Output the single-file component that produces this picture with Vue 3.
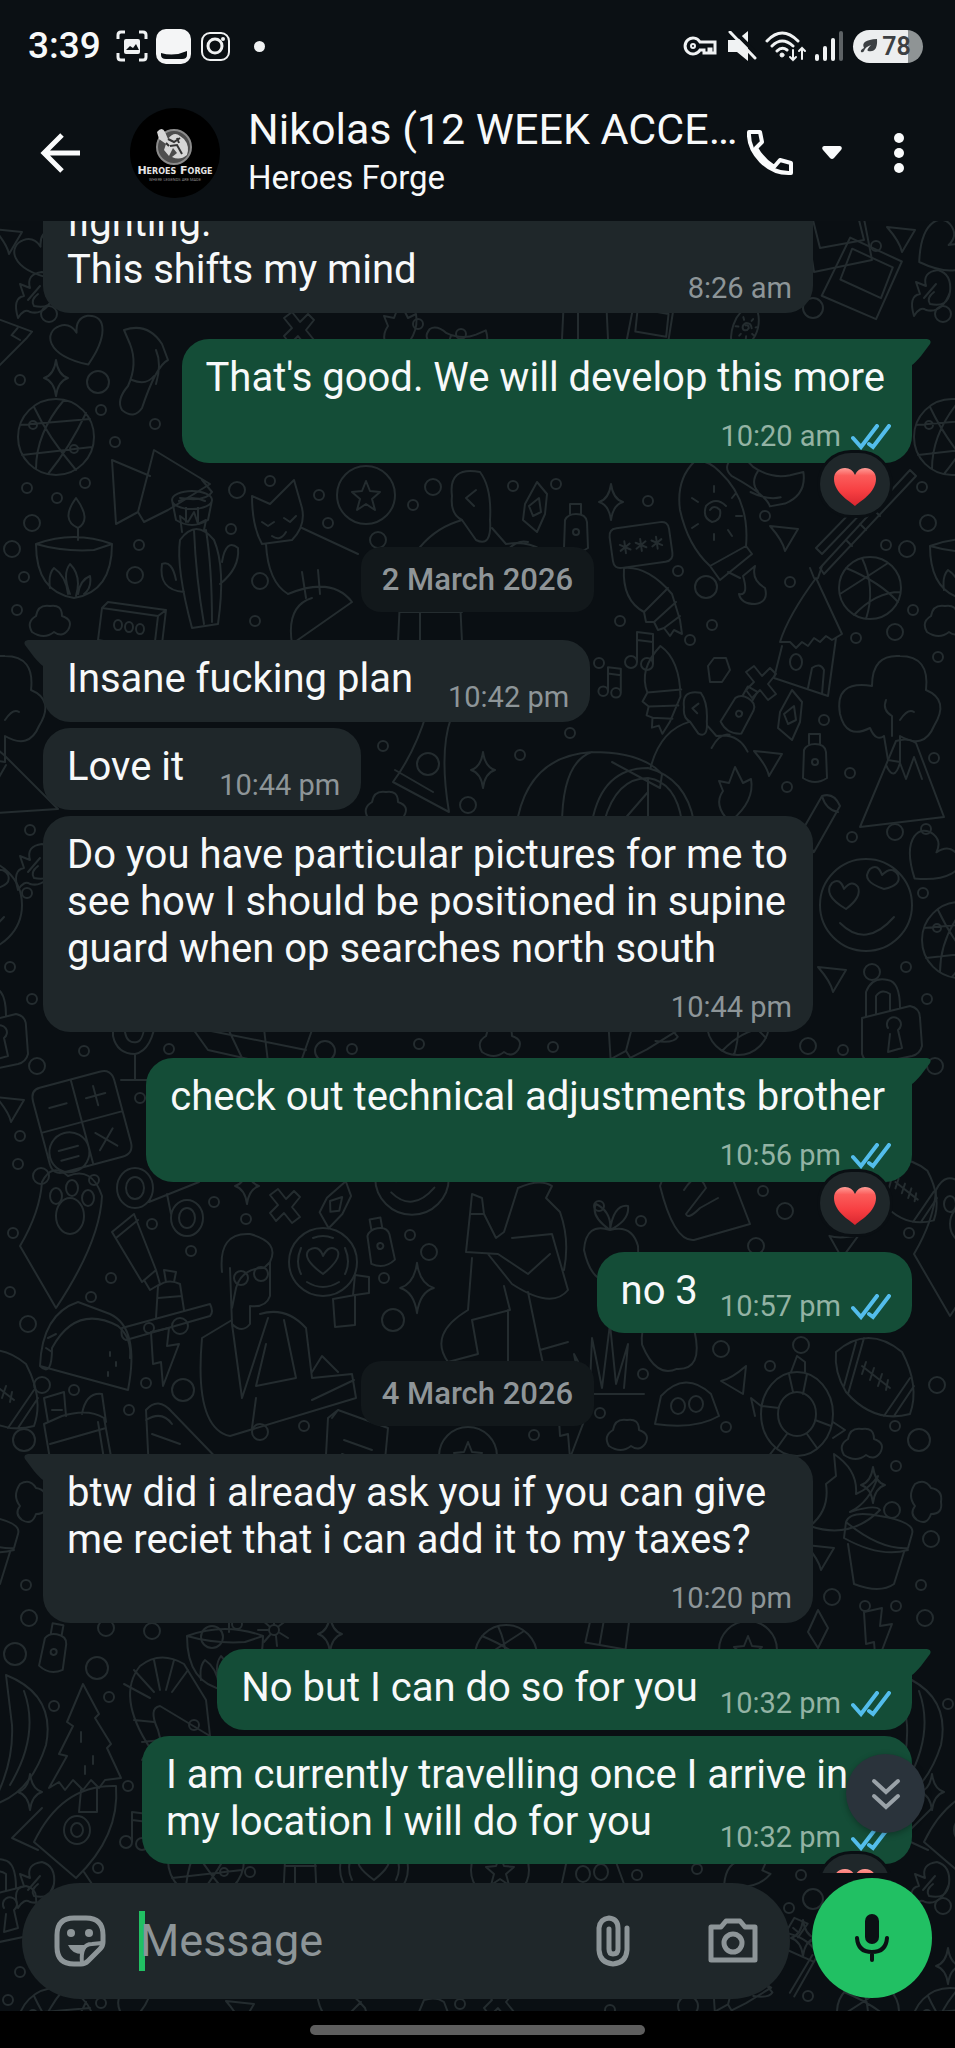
<script setup>
import { ref } from 'vue'

const contact = {
  name: 'Nikolas (12 WEEK ACCE…',
  company: 'Heroes Forge',
}

const draft = ref('')

/* layout: inline = time beside the text, stacked = time on its own row, tucked = time over the last line */
const feed = [
  { id: 1, side: 'in', layout: 'tucked', wide: true, text: 'fighting.\nThis shifts my mind', time: '8:26 am' },
  { id: 2, side: 'out', layout: 'stacked', tail: true, heart: true, text: "That's good. We will develop this more", time: '10:20 am' },
  { id: 3, date: '2 March 2026' },
  { id: 4, side: 'in', layout: 'inline', tail: true, text: 'Insane fucking plan', time: '10:42 pm' },
  { id: 5, side: 'in', layout: 'inline', text: 'Love it', time: '10:44 pm' },
  { id: 6, side: 'in', layout: 'stacked', text: 'Do you have particular pictures for me to see how I should be positioned in supine guard when op searches north south', time: '10:44 pm' },
  { id: 7, side: 'out', layout: 'stacked', tail: true, heart: true, text: 'check out technical adjustments brother', time: '10:56 pm' },
  { id: 8, side: 'out', layout: 'inline', text: 'no 3', time: '10:57 pm' },
  { id: 9, date: '4 March 2026' },
  { id: 10, side: 'in', layout: 'stacked', tail: true, text: 'btw did i already ask you if you can give me reciet that i can add it to my taxes?', time: '10:20 pm' },
  { id: 11, side: 'out', layout: 'inline', tail: true, text: 'No but I can do so for you', time: '10:32 pm' },
  { id: 12, side: 'out', layout: 'tucked', heart: true, text: 'I am currently travelling once I arrive in my location I will do for you', time: '10:32 pm' },
]

/* Wallpaper doodles, each drawn around 0,0 */
const shapes = {
  sparkle: 'M0-18Q2-3 12 0Q2 3 0 18Q-2 3-12 0Q-2-3 0-18Z',
  dart: 'M-14-11L14-8L1 14Q-1 4-14-11Z',
  heart: 'M0 24C-38 0-30-22-14-22Q-3-22 0-10Q4-24 16-22C36-16 26 6 0 24Z',
  sock: 'M-28-44Q-4-52 10-30L16-14Q4-8-10 34Q-18 46-30 36Q-36 26-24 12Q-14-10-22-30ZM-20 6Q-6 12 2 2M4-24Q10-10 4 10',
  globe: 'M-38 0A38 38 0 1 0 38 0A38 38 0 1 0-38 0M-22-30Q-8 0 20 33M-36-12L34-18M-34 18L36 10M8-37Q-20-4-20 32M30-24Q14 10-8 37M-27-12a4 4 0 1 0 8 0a4 4 0 1 0-8 0M14 12a4 4 0 1 0 8 0a4 4 0 1 0-8 0',
  map: 'M-46-28L-42 36L-20 24L-14 34L10 22L52-4L-4-38L-20 24M-46-28L-8-12M44-8L54 4Q48 14 22 10',
  cup: 'M-20-8A20 9 0 1 0 20-8A20 9 0 1 0-20-8L-16 12Q0 22 16 12L20-8M-13-7Q0-13 13-7M-6 0V14M6 0V14',
  coconut: 'M-38-14Q-38 34 0 40Q38 34 38-14Q0-28-38-14Q-10-6 20-8M38-14L20-8M4-18V-30Q-14-38 2-60Q18-38 4-30M-24 30Q-26 16-20 10Q-8 18-6 36M-4 36Q-12 16-4 6Q8 18 2 38M4 36Q6 22 16 18Q18 30 10 36',
  cactus: 'M-10 60Q-26 0-22-28Q-6-50 12-28Q24 0 16 56ZM-8-38Q-6 10 2 56M4-38Q10 0 10 54M-18 24Q-44 22-40-4Q-30-8-26 12M18 16Q38 0 36-20Q24-30 20-6M-20-36L-22-52L-14-46L-8-56L-4-44L4-48L2-38',
  star: 'M0-14L4-4L14-3L6 4L9 15L0 9L-9 15L-6 4L-14-3L-4-4ZM-29 0A29 29 0 1 0 29 0A29 29 0 1 0-29 0',
  fox: 'M-40-40L-22-32L2-56L10-28Q14-10 0 4L-30 8Q-40-10-40-40M-30-14L-24-10L-18-14M-8-18L-2-14L4-20M-20 0Q-12 6-6-4M10-8L66 18M-26 8Q-24 46-4 58M-4 58Q40 40 60 66L0 108Q-6 70 20 62M10 36L14 62M26 34L28 58',
  person: 'M-66 64Q-50 0 0-14L14 6Q30 14 28-14Q30-46 18-62Q-14-68-10-38Q-12-20 0-14M30-6L44 10Q80 4 96 36M36 30Q50 4 66 8M14-44L4-36L12-28',
  bottle: 'M-11-10Q-8-16 0-16Q10-16 11-8L12 18Q0 26-12 18ZM-6-16V-26H5V-16M-3 2A3 3 0 1 0 3 2A3 3 0 1 0-3 2',
  candy: 'M-10-4L2-26L12-14L10 6L2 24L-12 12ZM-6-2L4-10L6 4L-2 8Z',
  password: 'M-22-20H22Q30-20 30-12V12Q30 20 22 20H-22Q-30 20-30 12V-12Q-30-20-22-20ZM-16-6V6M-21-3L-11 3M-11-3L-21 3M0-6V6M-5-3L5 3M5-3L-5 3M16-6V6M11-3L21 3M21-3L11 3',
  surf: 'M-22-58Q-40-40-36-10Q-28 26-6 46L30 26Q34-20 4-48Q-10-62-22-58ZM-6 46L4 60L36 34L30 26M12 52L24 58M-6-10Q-2-16 4-10Q6 0-4 2Q-14-2-10-14Q0-24 10-14M-2-28V-34M16-22L20-27M20-4H26M-2 14V20M-18-18L-24-22M-18 4L-24 8M12 10L16 16',
  sticks: 'M-46 48L44-50L50-44L-42 54ZM-50 28L20-44L25-38L-44 34ZM-20 20L-14 26M-6 4L0 10M8-10L14-4',
  basket: 'M-31 0A31 31 0 1 0 31 0A31 31 0 1 0-31 0M-24-20Q10-6 28 14M-8-30Q6 0-4 31M18-25Q-8-8-30 6M30 4Q6 4-16 27',
  drop: 'M-10-12L2-22Q-2-8 12 0Q16 14 2 16Q-12 16-14 6Q-4 8-10-12Z',
  shell: 'M-28-34Q-4-36 20-8L28 18L30 32L22 28L18 34L12 26L6 28L2 20L-6 20L-8 10Q-30-2-28-34ZM-8 10L16-14M2 20L24 0M12 26L28 14',
  hut: 'M-28 12Q-20-14 8-52L34 4L24 10L18 6L12 12L6 8L0 16L-6 12L-12 18L-18 12ZM-26 16L-34 48L20 66L28 8M-18 32A6 8 0 1 0-6 32A6 8 0 1 0-18 32M0 58L4 38Q12 32 16 40L14 64M6-52L2-62M10-52L14-64',
  cloud: 'M-18 10Q-24 0-14-6Q-12-18 0-16Q12-18 12-6Q24-2 18 8Q12 16 4 10Q-6 18-18 10Z',
  box: 'M-30-14L26-6L22 28L-34 18ZM-30-14L-24-20L34-12L26-6M34-12L30 22L22 28M-18 3a4 5 0 1 0 8 0a4 5 0 1 0-8 0M-7 5a4 5 0 1 0 8 0a4 5 0 1 0-8 0M4 7a4 5 0 1 0 8 0a4 5 0 1 0-8 0',
  note: 'M-12 14A6 6 0 1 0 0 14A6 6 0 1 0-12 14M0 14V-16L16-14V16M4 16A6 6 0 1 0 16 16A6 6 0 1 0 4 16M0-8L16-6',
  hexagon: 'M-10-4L-4-12H8L12 0L4 12H-8Z',
  cross: 'M-16-10L-8-16L0-6L8-14L14-8L6 2L14 12L6 18L-2 8L-10 16L-16 8L-8 0Z',
  tree: 'M-6 36L-2 60L10 62V36Q34 50 44 26Q60 0 36-10Q40-44 10-44Q-18-46-18-14Q-56-20-50 14Q-44 40-20 28Q-14 42-6 36M2 36V16Q-8 10-4 0M10 20Q18 8 24 12',
  pizza: 'M-32 20Q-10-10 2-50Q20-54 26-44Q14-10 24 50ZM-8 2A11 11 0 1 0 14 2A11 11 0 1 0-8 2M-30 8L8 30',
  watch: 'M-86 46Q-76-26-10-30Q40-30 60-8L58 6L10-20M-40 44Q-40-20-10-30M-10 40Q0-14 46-14Q84-4 92 40M2 40Q14-4 46-4Q74 0 80 40M46-4V40M46 10L20 40',
  leaf: 'M-6 26Q-22 10-12-4L-16-14L-6-12L0-28L8-12L16-16Q20 6-4 26Z',
  mountain: 'M-42 52L-6-34Q6-38 14-32L42 42ZM-16-10Q-8 8-2-12L4 4L12-18L20 4',
  smiley: 'M-46 0A46 46 0 1 0 46 0A46 46 0 1 0-46 0M-26 18Q0 44 28 12M-20 4Q-44-10-34-22Q-26-28-22-16Q-14-26-8-18Q-4-8-20 4M18-16Q-6-24 4-36Q12-42 16-30Q26-40 32-30Q36-20 18-16',
  lock: 'M-26-8L22-20Q32-18 32-8L34 20Q32 28 24 30L-14 38Q-24 36-26 28ZM-22-10V-34Q-16-50 0-46Q12-44 12-18M-12-12V-30Q-6-38 2-32V-16M0 2A7 7 0 1 1 10 4L14 22L0 26L2 8',
  pencil: 'M-14 16L10-26Q22-30 28-16L2 30L-18 34ZM10-26Q14-12 26-10M-14 16Q-6 18 2 30',
  mic: 'M-10-34V2Q-8 14 2 12Q12 10 10-34M-22-30V6Q-18 24 0 24Q20 20 22-24M0 24V50M-14 50H12',
  grid: 'M-84-28L-54 14L36 34L50-6M-66-8L44 14M-40-20L-20 22M0-24L6 26',
  pane: 'M-32-44H30Q42-44 42-32V32Q42 44 30 44H-30Q-42 44-42 32V-32Q-42-44-32-44ZM0-44V44M-42 0H42M-28-22H-10M20-32V-12M10-22H30M10 14L28 32M28 14L10 32M-40 26A20 20 0 1 0 0 26A20 20 0 1 0-40 26M-30 22H-10M-30 32H-12',
  rings: 'M-20-8A18 20 0 1 0 16-8A18 20 0 1 0-20-8M-11-8A9 11 0 1 0 7-8A9 11 0 1 0-11-8M34 22A16 18 0 1 0 66 22A16 18 0 1 0 34 22M42 22A8 10 0 1 0 58 22A8 10 0 1 0 42 22M12 6L62-14M34 18L30-2',
  paw: 'M-12 86L-48 24Q-28-10-26-40Q-16-60 0-46Q24-56 34-26Q32 20-12 86ZM-12-6A14 18 0 1 0 16-6A14 18 0 1 0-12-6M-18-26a6 8 0 1 0 12 0a6 8 0 1 0-12 0M-2-34a6 8 0 1 0 12 0a6 8 0 1 0-12 0M14-24a6 8 0 1 0 12 0a6 8 0 1 0-12 0',
  ringHeart: 'M-34 0A34 34 0 1 0 34 0A34 34 0 1 0-34 0M0 12Q-22-4-14-12Q-4-18 0-6Q6-18 14-12Q20-4 0 12M-16 20Q0 30 16 20M-22-14Q-28 0-22 12M22-14Q28 0 22 12M-10-24Q0-28 10-24',
  tube: 'M-26-24L-4-42L18 14L4 26ZM-22-18L0-36M6 24L12 34L22 28L18 14',
  hat: 'M-50 36L38 12Q42 20 38 24L-46 48Q-52 46-50 36ZM-16 26L-14-6Q-4-14 8-8L12 18M-14 6L10 4M-6-10L-8-22L4-20L2-10',
  man: 'M-24-56Q-28-96 4-94Q34-86 24-66L18-60Q-4-60-10-40L-14-20M24-66V-32Q20-20 4-22V-4Q-4 6-14-4L-16-60M-12-50a7 7 0 1 0 14 0a7 7 0 1 0-14 0M8-54a7 7 0 1 0 14 0a7 7 0 1 0-14 0M-14-8L-44 10Q-52 100-16 108L110 70L106 46L66 50L60 0Q40-22 14-14M-14-4L-4 70L22-10M20 16L10 58L50 50L38-8M6 100L10 70M66 72L108 52M66 44L76 28L92 44',
  squares: 'M-20-6L2-10V20L-18 22ZM0-10L2-30L16-28V-12L2-10',
  walker: 'M0-102Q22-112 34-104L28-92L42-78Q52-50 46-20M0-102L-14-58L-22-52L-34-76L-48-76L-52-38L-20-36L10-16L32-36M-6-52L34-56L50 0Q34 20-6-6L-30-36M-46-32L-50 20Q-90 44-70 72L-40 64L-46 30L-8 20L-14-4M-10 20V80L40 72M10 2L22 60L50 52M22 60L26 78M-48-76L-46-96L-36-92L-34-76',
  apple: 'M0-22Q-24-30-26-2Q-18 34 4 28Q30 34 28-6Q22-28 0-22M0-22Q-20-36-14-48Q2-40 0-22Q4-48 18-46Q20-32 0-22',
  sign: 'M-44-16Q-34-48-6-40Q14-50 26-30L46 22L-10 38Q-30 40-44-16M-20-12Q-6-34 2-14L-18 12Q-16 18-4 6L14-4',
  taco: 'M-46 18Q-44-34-8-46L8-40L24-34Q54-20 42 42ZM-46 18Q-34 30-34 0Q-10-44 32-22Q46-10 44 10M-38-10L-30-14M24 4V8M30 14V18M22 24V28M-40 0L-34 4',
  bolt: 'M-14-24L4-28L2-10L14-12L-2 30L-4 6L-12 8Z',
  football: 'M-38-24Q-6-52 28-24Q46 10 36 38Q0 48-28 16Q-40-4-38-24ZM-18-34L-30 10M-10-38L-26 18M36 2L10 40M40 10L20 40M-12-10L16 12M-8-14L-12-2M0-8L-4 4M8-2L4 10M14 4L12 14',
  ghost: 'M-30 20L-24-8Q0-34 26-10L34 12Q10 26-30 20M-14 2a7 8 0 1 0 14 0a7 8 0 1 0-14 0M4 0a7 8 0 1 0 14 0a7 8 0 1 0-14 0',
  buoy: 'M-36 2A36 42 0 1 0 36 2A36 42 0 1 0-36 2M-19 2A19 22 0 1 0 19 2A19 22 0 1 0-19 2M-8-38L-4-20M10-38L6-18M-36-6L-18-4M34 14L18 8M-20 36L-10 22M20 36L10 22M-6-40L0-56L8-50V-40M-36-6L-46-14L-42 4M36 10L48 18L36 26M-22 36L-36 54L-20 60L-6 44',
  grass: 'M-40 40H38M-24 40L-32 0L-16 30L-14-16L-4 34L4-30L10 30L22-10L18 34',
  flask: 'M-34-24L-16-32Q10-40 26-30L38 36M-34-24L-22 46M-28-4L28-20M-30-26L-34-50L-14-56L-12-32M4-34Q8-56 24-54L28-26M-26-38H-16M20-26L30 36',
  cone: 'M-36 46L-40-36Q-28-50-14-34L40 22Q40 36 10 46M-40-26Q-24-36-14-22M-34-12L-6-2',
  card: 'M-30-30L-20-38L30-20L24 44H-34ZM-14-8L14 2M-16 6L10 16M-26-30L-20-38',
  pot: 'M-34-22Q-30-34 0-28Q36-22 32-10L28 4Q0 6-34-22ZM-34-22L-36-6Q0 14 28 6M-32 0L-26 40Q0 50 14 40L24 8',
  flame: 'M-30 36Q-10 20-14-6L-4-14L-6-36Q18-20 16 4Q30-2 38-14Q30 12 10 22Q36 14 40 20Q10 50-30 36Z',
  shrimp: 'M-14 48Q-48-4-24-34Q-4-50 20-36L42 0L46 36L36 30L-4 6Q-16 8-6 30L0 54L-22 60ZM-40-16L-14-2M-30-30L-10-8M-10-40L-4-10M10-40L2-10M24-30L8-8M-30 20L-10 22M-22 42L-2 40',
  pine: 'M-12-58L-28-20L-22-16L-36 12L-28 14L-46 46L-36 40L-30 48L-22 38L-12 48L-4 38L4 46L10 38L26 36L12 6L16 2L0-24L4-28ZM-14 48L-16 70H2V46M-14-10V0M-2 14V22M-10 24V32',
  banana: 'M-14-60Q36-40 26 10Q10 60-28 70Q-6 30-8-10ZM-14-60L-8-10M4-44Q20 0-10 50',
  rocket: 'M-38 10Q-10-48 44-46Q48 4 4 46ZM-8-2A13 14 0 1 0 18-2A13 14 0 1 0-8-2M-1-2A6 7 0 1 0 11-2A6 7 0 1 0-1-2M-34 18L-60 6L-30-24M12 40L24 58',
  fire: 'M-14 28Q-20 8-8 6L-12-6L-2-2Q-6-16 10-18Q24-14 22 4Q20 20 2 16Q-2 10 6 4M-14 28Q-8 18-2 22Q14 26 22 4M-4 10L8-4',
  blossom: 'M-5 0A5 5 0 1 0 5 0A5 5 0 1 0-5 0M0-6V-16M5-4L13-10M6 3L14 8M2 6L3 16M-4 5L-10 12M-6 0H-16M-5-4L-12-10',
  diamond: 'M-10 2L0-20L10-2L0 18Z',
  polaroid: 'M-34-28L22-38L34 24L-24 36ZM-26-20L18-28L26 4L-18 12Z',
  mountainSide: 'M-40 30L-14-40L-2-30L52 24ZM-20-16L-8-6L0-20',
  can: 'M-30-40H30L34 44H-34ZM-30-28H32M-10-28V44',
}

const doodles = [
  ['dart', 8, 240], ['heart', 44, 256, -20], ['fire', 32, 290], ['polaroid', 838, 236], ['polaroid', 862, 280, 35], ['dart', 901, 238],
  ['heart', 940, 250, 60], ['fire', 928, 288], ['mountainSide', 8, 340, 90, 0.6], ['heart', 80, 342, -20], ['sock', 152, 374], ['sparkle', 56, 378],
  ['globe', 56, 437], ['globe', 952, 437], ['map', 158, 488], ['cup', 192, 508], ['coconut', 74, 558], ['cactus', 202, 568],
  ['star', 366, 495], ['fox', 292, 536], ['person', 462, 534], ['candy', 535, 508], ['sparkle', 611, 502], ['bottle', 576, 530],
  ['password', 641, 545, -8], ['surf', 716, 520], ['sticks', 866, 520], ['sock', 760, 490, 100, 0.9], ['dart', 784, 537], ['drop', 753, 588],
  ['basket', 870, 588], ['coconut', 968, 560], ['shell', 652, 602], ['hut', 808, 630], ['cloud', 50, 622], ['cloud', 945, 622],
  ['box', 132, 622], ['note', 637, 648], ['hexagon', 718, 670], ['cross', 762, 682], ['tree', 890, 700], ['tree', -5, 700],
  ['can', 430, 640], ['shell', 660, 690, 40], ['note', 608, 680, 0, 0.8], ['bottle', 740, 712, 30], ['candy', 790, 716], ['sock', 455, 350, 90, 0.7],
  ['can', 585, 325, 0, 0.7], ['polaroid', 650, 328, 20, 0.7], ['leaf', 400, 330], ['cross', 300, 328], ['surf', 745, 330, 40, 0.4],
  ['pizza', 425, 762], ['sparkle', 483, 770], ['watch', 602, 782], ['dart', 768, 762], ['bottle', 815, 760], ['leaf', 735, 795],
  ['mountain', 902, 775], ['mountainSide', 6, 785], ['person', 690, 730, 0, 0.6], ['cloud', 386, 808], ['pencil', 812, 822], ['fire', 32, 862],
  ['smiley', 866, 905], ['smiley', -24, 905], ['globe', 960, 940], ['heart', 930, 860, 40], ['dart', 832, 978], ['lock', 888, 1026],
  ['lock', -6, 1034], ['mic', 135, 1030], ['grid', 262, 1036], ['cloud', 500, 1042], ['map', 640, 1034, 0, 0.7], ['basket', 738, 1024], ['dart', 10, 1108],
  ['pane', 82, 1122, -15], ['rings', 137, 1196], ['paw', 68, 1222], ['sparkle', 247, 1186], ['cross', 286, 1205], ['candy', 335, 1205, 20],
  ['tube', 138, 1256], ['hat', 172, 1292], ['ringHeart', 323, 1262], ['man', 246, 1328], ['bottle', 380, 1244, -10], ['sparkle', 417, 1288, 0, 1.4],
  ['squares', 353, 1305], ['walker', 518, 1290], ['apple', 610, 1252], ['sign', 704, 1202], ['smiley', 412, 1178, 0, 0.8], ['dart', 842, 1242, 120],
  ['football', 905, 1190, 0, 0.8], ['paw', 962, 1230], ['taco', 86, 1348], ['bolt', 165, 1356], ['apple', 668, 1342, -10], ['football', 874, 1376],
  ['ghost', 685, 1404], ['buoy', 797, 1412], ['dart', 735, 1380, 90], ['grass', 606, 1354], ['flask', 78, 1448], ['cone', 186, 1446],
  ['card', 358, 1448], ['cloud', 627, 1436], ['cloud', 862, 1445], ['star', 468, 1456], ['bolt', 572, 1428], ['football', -2, 1388],
  ['flame', 840, 1490], ['sparkle', 873, 1485], ['cloud', 925, 1502, 90], ['cloud', 30, 1502, 90], ['pot', 880, 1544], ['pot', -14, 1544], ['dart', 820, 1556],
  ['bottle', 54, 1650, 10], ['blossom', 274, 1630], ['sparkle', 330, 1634], ['coconut', 225, 1650], ['basket', 506, 1656], ['star', 748, 1650],
  ['diamond', 818, 1630], ['bolt', 878, 1636], ['can', 610, 1620, 10, 0.6], ['banana', 20, 1735], ['banana', 915, 1735], ['shrimp', 164, 1700],
  ['pine', 95, 1742], ['sparkle', 30, 1792], ['sparkle', 932, 1792], ['rocket', 72, 1832], ['rocket', 962, 1832], ['note', 132, 1828],
  ['fire', 32, 1880], ['fire', 927, 1880], ['globe', 206, 1860], ['can', 300, 1880, 0, 0.5], ['ringHeart', 374, 1868], ['star', 500, 1870],
  ['ghost', 590, 1872], ['leaf', 748, 1872, 50], ['flask', 790, 1960, 40, 0.7], ['sparkle', 803, 1938], ['sparkle', 948, 1966], ['lock', 4, 1906],
  ['globe', 56, 2026], ['leaf', 134, 1996], ['cross', 500, 2000], ['dart', 240, 2012], ['shell', 345, 2016], ['mountain', 430, 2034],
  ['map', 740, 1990, 0, 0.6], ['basket', 868, 2012], ['globe', 950, 2026],
]

const dots = [
  [20, 380, 5], [98, 382, 11], [101, 410, 5], [155, 424, 5], [115, 442, 5], [49, 314, 8], [813, 308, 10], [876, 246, 5], [943, 314, 8],
  [27, 488, 5], [85, 483, 5], [57, 498, 5], [32, 523, 8], [237, 490, 8], [270, 481, 5], [319, 495, 5], [328, 523, 5], [378, 540, 8],
  [433, 487, 8], [413, 505, 5], [513, 486, 5], [556, 484, 5], [648, 501, 5], [231, 529, 5], [12, 549, 8], [139, 545, 5], [135, 575, 8],
  [24, 577, 5], [260, 581, 8], [255, 621, 5], [17, 610, 5], [765, 516, 5], [922, 487, 5], [928, 523, 8], [907, 549, 8], [886, 545, 5],
  [678, 571, 5], [706, 587, 11], [790, 582, 5], [620, 621, 5], [712, 625, 5], [856, 638, 5], [895, 632, 8], [690, 640, 5], [913, 610, 5],
  [599, 663, 5], [938, 657, 5], [418, 324, 5], [461, 334, 5], [383, 746, 5], [520, 755, 5], [570, 733, 5], [468, 805, 8], [824, 720, 5],
  [850, 773, 5], [787, 787, 5], [934, 758, 5], [895, 832, 8], [852, 837, 5], [926, 829, 5], [30, 830, 5], [27, 893, 5], [10, 967, 5],
  [32, 999, 5], [923, 893, 5], [872, 972, 8], [906, 967, 5], [927, 999, 5], [37, 1066, 8], [84, 1051, 5], [169, 1049, 5], [325, 1051, 10],
  [352, 1049, 5], [419, 1044, 5], [553, 1047, 5], [808, 1046, 8], [843, 1050, 5], [935, 1066, 8], [20, 1136, 5], [18, 1164, 5], [41, 1176, 8],
  [94, 1180, 5], [140, 1098, 5], [214, 1202, 5], [152, 1224, 5], [246, 1219, 5], [13, 1233, 5], [191, 1251, 5], [111, 1278, 5], [410, 1235, 5],
  [429, 1252, 8], [384, 1278, 5], [91, 1297, 5], [10, 1292, 5], [28, 1324, 8], [149, 1328, 5], [180, 1326, 8], [393, 1320, 11], [146, 1383, 5],
  [183, 1390, 11], [42, 1385, 8], [74, 1390, 5], [24, 1440, 11], [129, 1410, 5], [260, 1432, 8], [304, 1426, 5], [534, 1435, 5], [599, 1206, 5],
  [641, 1221, 5], [763, 1191, 5], [785, 1211, 8], [756, 1246, 8], [909, 1233, 5], [721, 1349, 8], [801, 1345, 8], [770, 1366, 5], [643, 1374, 5],
  [600, 1413, 5], [726, 1427, 5], [895, 1426, 5], [919, 1440, 11], [937, 1385, 8], [896, 1466, 5], [26, 1585, 5], [29, 1618, 8], [15, 1654, 11],
  [106, 1628, 8], [152, 1631, 8], [212, 1637, 11], [237, 1624, 5], [97, 1668, 11], [109, 1697, 5], [54, 1706, 5], [194, 1725, 5], [128, 1786, 5],
  [892, 1510, 8], [931, 1539, 8], [921, 1585, 5], [832, 1597, 8], [865, 1606, 5], [896, 1606, 5], [925, 1618, 8], [948, 1704, 5], [98, 1868, 5],
  [250, 1872, 5], [637, 1875, 5], [697, 1869, 5], [801, 1875, 5], [813, 1899, 10], [789, 1908, 5], [943, 1906, 8], [20, 1972, 5], [101, 2003, 5],
  [460, 2004, 5], [688, 2006, 10], [808, 1996, 5], [8, 2000, 5], [610, 2010, 5],
]

function place([, x, y, turn = 0, size = 1]) {
  return `translate(${x} ${y}) rotate(${turn}) scale(${size})`
}
</script>

<template>
  <div class="phone">
    <header class="top">
      <div class="status">
        <span class="status-time">3:39</span>
        <svg class="ico-scan" viewBox="0 0 32 32" width="32" height="32">
          <path d="M2 9V5Q2 2 5 2H9M23 2H27Q30 2 30 5V9M30 23V27Q30 30 27 30H23M9 30H5Q2 30 2 27V23" fill="none" stroke="#f0f2f3" stroke-width="3" />
          <rect x="8" y="9" width="16" height="15" rx="2" fill="#f0f2f3" />
          <path d="M10 20L14 16L17 18L20 14L23 20Z" fill="#0b1014" />
        </svg>
        <svg class="ico-app" viewBox="0 0 35 35" width="35" height="35">
          <rect width="35" height="35" rx="10" fill="#f4f5f6" />
          <path d="M5 24Q18 28 31 22V26Q31 30 26 30H10Q5 30 5 26Z" fill="#0b1014" />
        </svg>
        <svg class="ico-insta" viewBox="0 0 29 29" width="29" height="29" fill="none" stroke="#f0f2f3">
          <rect x="1" y="1" width="27" height="27" rx="8" stroke-width="2" />
          <circle cx="14" cy="14" r="7" stroke-width="3" />
          <circle cx="22" cy="7" r="2" fill="#f0f2f3" stroke="none" />
        </svg>
        <span class="status-dot"></span>
        <span class="spacer"></span>
        <svg class="ico-key" viewBox="0 0 34 20" width="34" height="20" fill="none" stroke="#f0f2f3" stroke-width="3">
          <path d="M17 6A8 8 0 1 0 17 14H21V17H26V13H28V17H32V6Z" />
          <circle cx="10" cy="10" r="2" stroke-width="2" />
        </svg>
        <svg class="ico-mute" viewBox="0 0 30 30" width="30" height="30">
          <path d="M1 9H10L21 0V30L10 21H1Z" fill="#f0f2f3" />
          <path d="M4-3L33 26" stroke="#0b1014" stroke-width="4" />
          <path d="M3 1L28 27" stroke="#f0f2f3" stroke-width="3" stroke-linecap="round" />
        </svg>
        <svg class="ico-wifi" viewBox="0 0 42 31" width="42" height="31" fill="none" stroke="#f0f2f3" stroke-width="3" stroke-linecap="round">
          <path d="M2 10Q17-6 33 10M7 15Q17 5 28 15M12 20Q17 15 22 19" />
          <circle cx="17" cy="24" r="2" fill="#f0f2f3" stroke-width="1" />
          <path d="M28 19V29M25 26L28 29L31 26M37 28V17M34 20L37 17L40 20" stroke-width="2" />
        </svg>
        <svg class="ico-signal" viewBox="0 0 28 30" width="28" height="30">
          <rect x="0" y="23" width="4" height="7" rx="2" fill="#f0f2f3" />
          <rect x="8" y="15" width="4" height="15" rx="2" fill="#f0f2f3" />
          <rect x="16" y="7" width="4" height="23" rx="2" fill="#f0f2f3" />
          <rect x="24" y="0" width="4" height="30" rx="2" fill="#5d6265" />
        </svg>
        <span class="battery">
          <svg viewBox="0 0 18 14" width="18" height="14"><path d="M1 13Q0 11 4 9Q0 1 17 0Q18 14 8 12Q6 11 11 6Q5 8 4 12Q3 14 1 13Z" fill="#3c4043" /></svg>
          78
        </span>
      </div>

      <div class="bar">
        <button type="button" class="bar-btn bar-back" aria-label="Back">
          <svg viewBox="0 0 40 40" width="40" height="40" fill="none" stroke="#fafbfc" stroke-width="5"><path d="M40 20H4M22 2L4 20L22 38" /></svg>
        </button>
        <svg class="avatar" viewBox="0 0 90 90" width="90" height="90" aria-label="Heroes Forge logo">
          <circle cx="45" cy="45" r="45" fill="#000" />
          <circle cx="44" cy="39" r="17" fill="#4d4d4d" stroke="#8b8b8b" stroke-width="2" />
          <path d="M27 24Q32 18 35 24L38 31Q44 23 50 28L54 31Q60 38 57 47Q50 53 42 49L47 45L43 40L39 48L34 42L36 36L29 31Z" fill="#d6d6d6" />
          <path d="M38 31L44 34L50 30M40 38L47 37L52 46M36 35L39 38M47 30L49 35" stroke="#333" stroke-width="2" fill="none" />
          <text x="45" y="66" class="avatar-name">Heroes Forge</text>
          <text x="45" y="73" class="avatar-line">WHERE LEGENDS ARE MADE</text>
        </svg>
        <div class="who">
          <h1 class="who-name">{{ contact.name }}</h1>
          <p class="who-sub">{{ contact.company }}</p>
        </div>
        <button type="button" class="bar-btn bar-call" aria-label="Call">
          <svg viewBox="0 0 46 46" width="46" height="46" fill="none" stroke="#fafbfc" stroke-width="4" stroke-linejoin="round">
            <path d="M2 2H13L15 12L9 18Q15 29 27 37L33 30L44 33V43Q27 44 14 31T2 2Z" />
          </svg>
        </button>
        <button type="button" class="bar-btn bar-more-calls" aria-label="Call options">
          <svg viewBox="0 0 20 13" width="20" height="13"><path d="M2 0H18Q21 1 19 4L12 12Q10 14 8 12L1 4Q-1 1 2 0Z" fill="#fafbfc" /></svg>
        </button>
        <button type="button" class="bar-btn" aria-label="Menu">
          <svg viewBox="0 0 12 42" width="12" height="42" fill="#fafbfc"><circle cx="6" cy="6" r="5" /><circle cx="6" cy="21" r="5" /><circle cx="6" cy="36" r="5" /></svg>
        </button>
      </div>
    </header>

    <div class="room">
      <svg class="wallpaper" viewBox="0 221 955 1790" preserveAspectRatio="xMidYMin slice" aria-hidden="true">
        <path v-for="(d, i) in doodles" :key="'d' + i" :d="shapes[d[0]]" :transform="place(d)" vector-effect="non-scaling-stroke" />
        <circle v-for="(c, i) in dots" :key="'c' + i" :cx="c[0]" :cy="c[1]" :r="c[2]" />
      </svg>

      <main class="chat">
        <template v-for="m in feed" :key="m.id">
          <div v-if="m.date" class="date">{{ m.date }}</div>
          <article
            v-else
            class="msg"
            :class="['msg--' + m.side, 'msg--' + m.layout, { 'msg--tail': m.tail, 'msg--wide': m.wide, 'msg--reacted': m.heart }]"
          >
            <svg v-if="m.tail" class="tail" viewBox="0 0 20 26" width="20" height="26">
              <path d="M0 0H16Q21 1 19 5L10 17Q4 24 1 26H0Z" />
            </svg>
            <p class="msg-text">{{ m.text }}</p>
            <span class="meta">
              {{ m.time }}
              <svg v-if="m.side === 'out'" class="ticks" viewBox="0 0 40 26" width="40" height="26" fill="none" stroke="#53bdeb" stroke-width="4" stroke-linecap="round">
                <path d="M2 14L10 23L26 2M18 20L22 23L38 2" />
              </svg>
            </span>
            <span v-if="m.heart" class="heart">
              <svg viewBox="0 0 42 38" width="42" height="38">
                <defs>
                  <linearGradient :id="'red' + m.id" x1="0" y1="0" x2="0" y2="1">
                    <stop offset="0" stop-color="#ff9c96" />
                    <stop offset="0.2" stop-color="#fb5c5a" />
                    <stop offset="0.6" stop-color="#f73f42" />
                    <stop offset="1" stop-color="#d9262f" />
                  </linearGradient>
                </defs>
                <path d="M21 38C17 34 0 25 0 11C0 4 5 0 11 0Q18 0 21 7Q24 0 31 0C37 0 42 4 42 11C42 25 25 34 21 38Z" :fill="'url(#red' + m.id + ')'" />
              </svg>
            </span>
          </article>
        </template>

        <button type="button" class="jump" aria-label="Jump to latest">
          <svg viewBox="0 0 30 32" width="30" height="32" fill="none" stroke="#9aa2a8" stroke-width="4" stroke-linecap="round"><path d="M3 3L15 14L27 3M3 18L15 29L27 18" /></svg>
        </button>
      </main>

      <form class="composer" @submit.prevent>
        <div class="field">
          <button type="button" class="field-btn" aria-label="Stickers">
            <svg viewBox="0 0 52 52" width="52" height="52">
              <path d="M20 3H32Q49 3 49 20V27Q49 31 46 34L34 46Q31 49 27 49H20Q3 49 3 32V20Q3 3 20 3Z" fill="none" stroke="#8d9598" stroke-width="5" />
              <path d="M28 48Q26 29 38 29L48 28" fill="none" stroke="#8d9598" stroke-width="4" />
              <circle cx="17" cy="18" r="4" fill="#8d9598" />
              <circle cx="35" cy="18" r="4" fill="#8d9598" />
              <path d="M14 30H34L28 39Q18 39 14 30Z" fill="#8d9598" />
            </svg>
          </button>
          <span class="caret"></span>
          <input v-model="draft" class="field-input" type="text" placeholder="Message" aria-label="Message" />
          <button type="button" class="field-btn field-clip" aria-label="Attach">
            <svg viewBox="0 0 34 52" width="34" height="52" fill="none" stroke="#8d9598" stroke-width="5" stroke-linecap="round">
              <path d="M31 13V35Q30 48 17 49Q4 48 3 35V13Q4 4 13 3Q22 4 22 13V34Q22 39 17 39Q13 39 13 34V14" />
            </svg>
          </button>
          <button type="button" class="field-btn" aria-label="Camera">
            <svg viewBox="0 0 50 46" width="50" height="46" fill="none" stroke="#8d9598" stroke-width="5" stroke-linejoin="round">
              <path d="M3 9H13L18 3H32L37 9H47V42H3Z" />
              <circle cx="25" cy="25" r="9" />
            </svg>
          </button>
        </div>
        <button type="button" class="voice" aria-label="Record voice message">
          <svg viewBox="0 0 34 48" width="34" height="48">
            <rect x="10" y="0" width="14" height="30" rx="7" fill="#0b1014" />
            <path d="M2 24Q3 38 17 38T32 24M17 38V46" fill="none" stroke="#0b1014" stroke-width="4" stroke-linecap="round" />
          </svg>
        </button>
      </form>
    </div>

    <footer class="nav"><span class="nav-pill"></span></footer>
  </div>
</template>

<style>
body {
  background: #000;
}
</style>

<style scoped>
.phone {
  display: flex;
  flex-direction: column;
  height: 100vh;
  background: #0b1014;
  color: #f7f9fa;
  font-family: Roboto, 'Noto Sans', sans-serif;
}

button {
  padding: 0;
  border: 0;
  background: none;
  cursor: pointer;
}

svg {
  display: block;
  flex-shrink: 0;
}

.status {
  display: flex;
  align-items: center;
  height: 92px;
  padding: 0 32px 0 28px;
}

.status-time {
  margin-right: 15px;
  font-size: 37px;
  font-weight: 500;
  line-height: 42px;
}

.ico-app {
  margin: 0 10px 0 8px;
}

.status-dot {
  width: 11px;
  height: 11px;
  margin-left: 24px;
  border-radius: 50%;
  background: #f0f2f3;
}

.spacer {
  flex: 1;
}

.ico-mute {
  margin: 0 8px 0 10px;
}

.ico-signal {
  margin: 0 10px 0 8px;
}

.battery {
  display: flex;
  align-items: center;
  justify-content: center;
  gap: 4px;
  width: 70px;
  height: 33px;
  padding-right: 5px;
  box-sizing: border-box;
  border-radius: 17px;
  background: linear-gradient(to right, #eceeef 78%, #8f9495 78%);
  color: #3c4043;
  font-size: 25px;
  font-weight: 600;
}

.bar {
  display: flex;
  align-items: center;
  height: 129px;
  padding: 0 50px 8px 40px;
  box-sizing: border-box;
}

.bar-btn {
  flex-shrink: 0;
}

.bar-back {
  margin-right: 50px;
}

.avatar-name {
  fill: #e4e4e4;
  font-family: 'DejaVu Sans', sans-serif;
  font-size: 11px;
  font-weight: 700;
  font-variant: small-caps;
  text-anchor: middle;
}

.avatar-line {
  fill: #8a8a8a;
  font-size: 4px;
  text-anchor: middle;
}

.who {
  flex: 1;
  min-width: 0;
  margin-left: 28px;
}

.who-name,
.who-sub {
  margin: 0;
  overflow: hidden;
  font-weight: 400;
  white-space: nowrap;
}

.who-name {
  font-size: 43px;
  line-height: 50px;
}

.who-sub {
  font-size: 33px;
  line-height: 48px;
}

.bar-call {
  margin: 0 29px 0 8px;
}

.bar-more-calls {
  margin-right: 51px;
}

.room {
  position: relative;
  display: flex;
  flex: 1;
  flex-direction: column;
  min-height: 0;
  background: #0a0f13;
}

.wallpaper {
  position: absolute;
  inset: 0;
  width: 100%;
  height: 100%;
  fill: none;
  stroke: #242c2f;
  stroke-width: 2;
  stroke-linejoin: round;
  stroke-linecap: round;
}

.chat {
  position: relative;
  display: flex;
  flex: 1;
  flex-direction: column;
  justify-content: flex-end;
  min-height: 0;
  padding: 0 43px 9px;
  overflow: hidden;
}

.date {
  align-self: center;
  flex-shrink: 0;
  margin: 28px 0;
  padding: 0 21px;
  border-radius: 20px;
  background: #12181b;
  color: #8f9598;
  font-size: 31px;
  font-weight: 500;
  line-height: 65px;
}

.msg {
  position: relative;
  display: grid;
  flex-shrink: 0;
  max-width: 770px;
  margin-top: 6px;
  padding: 15px 21px 7px 24px;
  box-sizing: border-box;
  border-radius: 27px;
}

.msg--in {
  align-self: flex-start;
  background: #1f272a;
  color: #8d9598;
  fill: #1f272a;
}

.msg--out {
  align-self: flex-end;
  padding-bottom: 9px;
  background: #144d37;
  color: #93b3a4;
  fill: #144d37;
}

.msg--tail {
  margin-top: 26px;
}

.date + .msg {
  margin-top: 0;
}

.msg--reacted + .msg {
  margin-top: 70px;
}

.msg--reacted + .date {
  margin-top: 84px;
}

.msg--wide {
  width: 770px;
}

.msg--in.msg--tail {
  border-top-left-radius: 0;
}

.msg--out.msg--tail {
  border-top-right-radius: 0;
}

.tail {
  position: absolute;
  top: 0;
}

.msg--out .tail {
  left: 100%;
  margin-left: -1px;
}

.msg--in .tail {
  right: 100%;
  margin-right: -1px;
  transform: scaleX(-1);
}

.msg-text {
  margin: 0;
  color: #f7f9fa;
  font-size: 40px;
  line-height: 47px;
  white-space: pre-line;
}

.meta {
  display: flex;
  align-items: center;
  justify-self: end;
  align-self: end;
  gap: 10px;
  font-size: 29px;
  line-height: 35px;
  white-space: nowrap;
}

.msg--inline {
  grid-template-columns: auto auto;
}

.msg--inline .msg-text {
  padding-bottom: 13px;
}

.msg--inline.msg--in {
  column-gap: 35px;
}

.msg--inline.msg--out {
  column-gap: 22px;
}

.msg--out.msg--inline .msg-text,
.msg--out.msg--tucked .msg-text {
  padding-bottom: 10px;
}

.msg--stacked {
  row-gap: 18px;
}

.msg--out.msg--stacked .msg-text {
  padding-right: 6px;
}

.msg--tucked .msg-text,
.msg--tucked .meta {
  grid-area: 1 / 1;
}

.msg--tucked .msg-text {
  padding-bottom: 13px;
}

.heart {
  position: absolute;
  right: 22px;
  bottom: -52px;
  display: flex;
  align-items: center;
  justify-content: center;
  width: 70px;
  height: 62px;
  padding-top: 5px;
  box-sizing: border-box;
  border-radius: 31px;
  background: #1f272a;
  box-shadow: 0 0 0 3px #0a0f13;
}

.jump {
  position: absolute;
  right: 30px;
  bottom: 40px;
  display: flex;
  align-items: center;
  justify-content: center;
  width: 79px;
  height: 79px;
  border-radius: 50%;
  background: #2a333b;
  box-shadow: 0 2px 6px rgba(0, 0, 0, 0.3);
}

.composer {
  position: relative;
  display: flex;
  align-items: flex-end;
  gap: 22px;
  padding: 5px 23px 12px 22px;
}

.field {
  display: flex;
  flex: 1;
  align-items: center;
  min-width: 0;
  height: 116px;
  padding: 0 32px;
  box-sizing: border-box;
  border-radius: 58px;
  background: #1f272a;
}

.field-btn {
  flex-shrink: 0;
}

.caret {
  width: 6px;
  height: 60px;
  margin: 0 -5px 0 33px;
  background: #21c063;
}

.field-input {
  flex: 1;
  min-width: 0;
  padding: 0;
  border: 0;
  outline: 0;
  background: none;
  color: #f7f9fa;
  font-family: inherit;
  font-size: 45px;
  line-height: 52px;
}

.field-input::placeholder {
  color: #8d9598;
  opacity: 1;
}

.field-clip {
  margin-right: 78px;
}

.voice {
  display: flex;
  align-items: center;
  justify-content: center;
  flex-shrink: 0;
  width: 120px;
  height: 120px;
  margin-bottom: 1px;
  border-radius: 50%;
  background: #21c063;
}

.nav {
  display: flex;
  align-items: center;
  justify-content: center;
  flex-shrink: 0;
  height: 37px;
  background: #000;
}

.nav-pill {
  width: 35%;
  height: 10px;
  border-radius: 5px;
  background: #5e5e5e;
}
</style>
